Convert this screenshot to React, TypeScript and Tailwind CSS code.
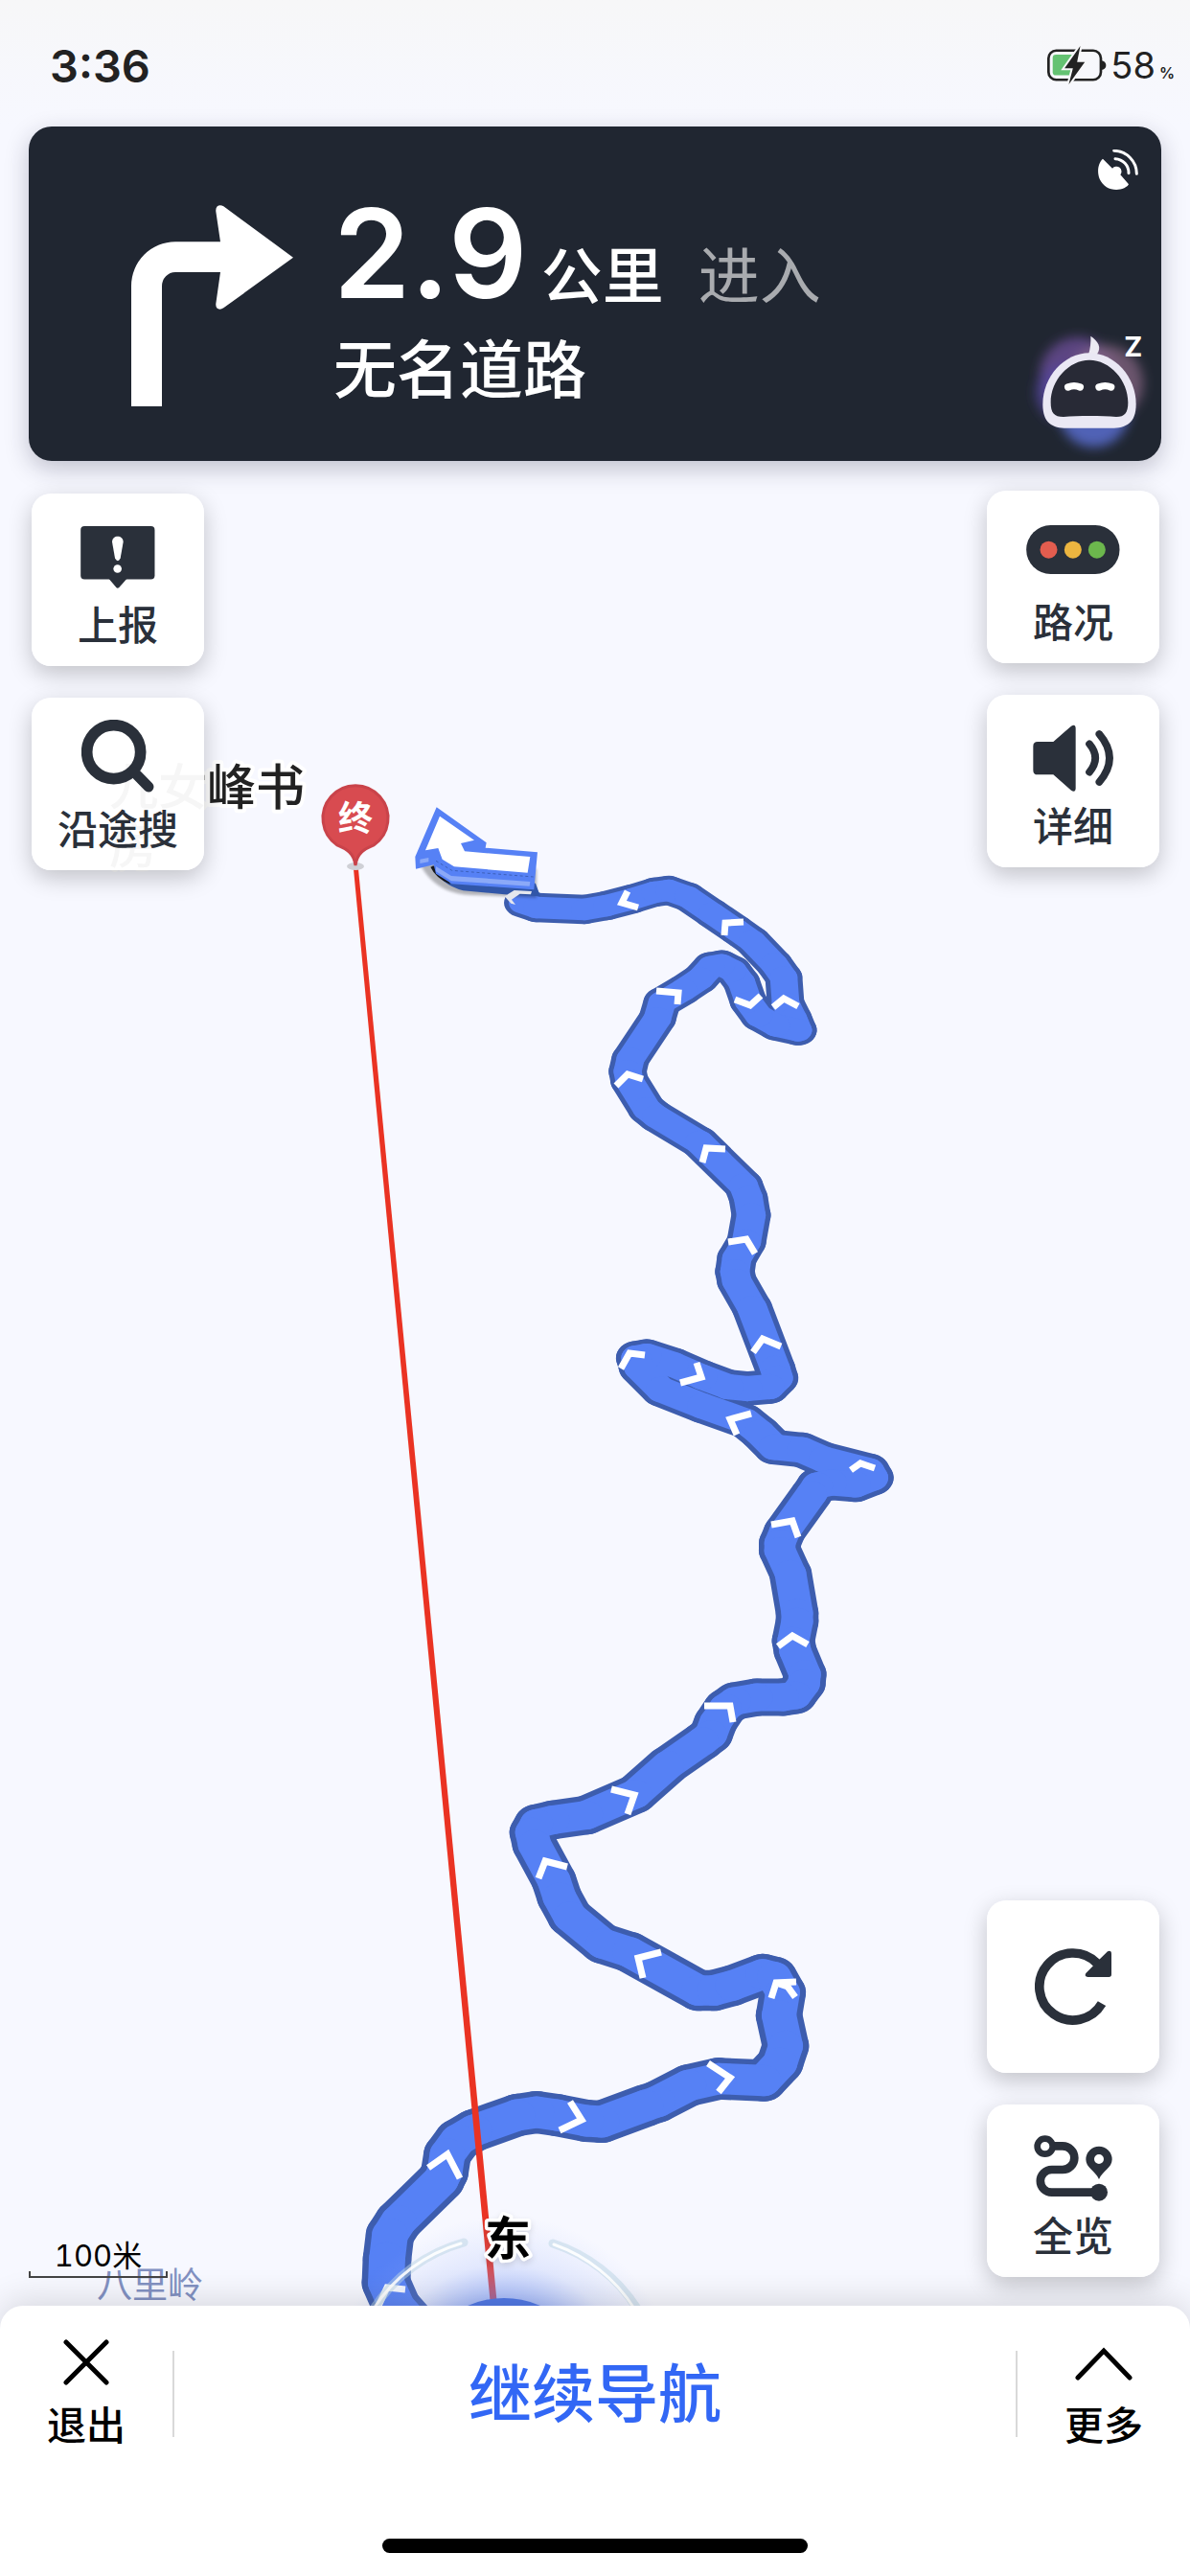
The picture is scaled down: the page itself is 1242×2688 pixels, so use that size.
import type { ReactNode } from 'react'

type Point = [number, number]

// centre line of the planned route, from the next turn back to the car
const ROUTE: Point[] = [
  [545, 942], [560, 947], [610, 949], [633, 945], [660, 938], [683, 931], [698, 929],
  [718, 936], [743, 953], [768, 970], [785, 982], [808, 1006], [818, 1020], [820, 1047],
  [828, 1063], [833, 1075], [810, 1070], [792, 1060], [781, 1045], [774, 1025], [765, 1013],
  [753, 1007], [742, 1009], [731, 1021], [713, 1033], [691, 1046], [686, 1063], [658, 1105],
  [655, 1118], [657, 1128], [675, 1157], [685, 1165], [730, 1192], [776, 1237], [781, 1250],
  [784, 1268], [779, 1296], [769, 1313], [767, 1327], [769, 1337], [785, 1365], [809, 1428],
  [812, 1438], [803, 1447], [780, 1449], [760, 1447], [733, 1437], [703, 1424], [675, 1415],
  [664, 1417], [667, 1427], [690, 1450], [733, 1467], [778, 1483], [793, 1495], [808, 1510],
  [837, 1513], [860, 1523], [907, 1535], [911, 1542], [893, 1549], [868, 1547], [853, 1550],
  [847, 1559], [819, 1598], [814, 1610], [814, 1618], [825, 1642], [832, 1683], [832, 1692],
  [828, 1712], [830, 1723], [840, 1747], [839, 1757], [830, 1769], [817, 1771], [790, 1771],
  [767, 1775], [757, 1782], [747, 1797], [742, 1810], [733, 1817], [697, 1842], [663, 1872],
  [612, 1894], [577, 1899], [560, 1903], [555, 1912], [558, 1925], [578, 1962], [584, 1980],
  [595, 2000], [629, 2028], [657, 2037], [729, 2077], [745, 2077], [764, 2072], [796, 2060],
  [808, 2063], [817, 2079], [813, 2103], [820, 2135], [814, 2153], [797, 2171], [750, 2169],
  [719, 2176], [686, 2193], [674, 2197], [628, 2214], [612, 2213], [581, 2207], [560, 2204],
  [540, 2207], [495, 2223], [478, 2233], [467, 2248], [464, 2267], [460, 2275], [416, 2318],
  [407, 2332], [404, 2357], [403, 2382], [414, 2407], [430, 2425],
]

const CHEVRONS = [
  '655,930 649,942 666,947',
  '776,962 757,963 756,976',
  '807,1051 818,1042 833,1050',
  '767,1043 783,1049 794,1039',
  '685,1034 708,1036 707,1048',
  '643,1133 655,1121 671,1126',
  '757,1199 737,1198 733,1213',
  '760,1296 779,1293 788,1308',
  '786,1411 796,1397 815,1405',
  '727,1422 732,1437 710,1443',
  '648,1428 657,1412 673,1414',
  '784,1475 762,1481 769,1497',
  '888,1534 898,1527 913,1532',
  '805,1591 827,1587 833,1604',
  '812,1718 827,1707 843,1716',
  '735,1780 762,1780 765,1797',
  '638,1867 662,1873 655,1893',
  '562,1960 569,1942 592,1948',
  '690,2037 666,2043 671,2064',
  '805,2085 810,2069 831,2068',
  '813,2070 822,2073 830,2084',
  '739,2153 762,2168 750,2183',
  '595,2193 607,2212 584,2223',
  '447,2262 467,2248 480,2273',
  '395,2406 404,2387 423,2389',
]

// the map is tilted: the line gets wider and less flattened towards the viewer
function RouteStroke({ color, inset }: { color: string; inset: number }) {
  return (
    <g stroke={color} strokeLinecap="round">
      {ROUTE.slice(1).map(([x, y], i) => {
        const [px, py] = ROUTE[i]
        const near = (y - 950) / 1450
        const flat = 0.8 + near * 0.11
        const width = 38 + near * 13 - inset * (10 + near * 3)
        return (
          <line
            key={i}
            x1={px}
            y1={py / flat}
            x2={x}
            y2={y / flat}
            strokeWidth={width}
            transform={`scale(1 ${flat})`}
          />
        )
      })}
    </g>
  )
}

function MapCanvas() {
  return (
    <svg
      className="absolute inset-0 h-full w-full font-['Inter','Noto_Sans_CJK_SC',sans-serif]"
      viewBox="0 0 1242 2688"
      preserveAspectRatio="xMidYMin slice"
      fill="none"
    >
      <defs>
        <radialGradient id="glow">
          <stop offset="0.5" stopColor="#6c8ff6" stopOpacity="0.6" />
          <stop offset="0.72" stopColor="#8fa9f8" stopOpacity="0.2" />
          <stop offset="1" stopColor="#a0b6fa" stopOpacity="0" />
        </radialGradient>
        <filter id="soft" x="-30%" y="-30%" width="160%" height="160%">
          <feGaussianBlur stdDeviation="5" />
        </filter>
      </defs>

      <g fontSize="51" fontWeight="500" fill="#222" stroke="#fff" strokeWidth="8" strokeLinejoin="round" paintOrder="stroke">
        <text x="114" y="840">九女峰书</text>
        <text x="114" y="901">房</text>
      </g>
      <text x="101" y="2398" fontSize="37" fill="#8291c2">八里岭</text>

      <RouteStroke color="#3d5dae" inset={0} />
      <RouteStroke color="#5681f5" inset={1} />
      <g stroke="#fff" strokeWidth="7" strokeLinejoin="miter">
        {CHEVRONS.map((points) => <polyline key={points} points={points} />)}
      </g>

      {/* next manoeuvre */}
      <g transform="translate(360 780) scale(.3333)">
        <path d="M250 390Q300 460 400 462L600 470L600 380L225 350Z" fill="#000" opacity=".28" filter="url(#soft)" />
        <path d="M272 370Q300 430 370 448L500 460L612 466L597 425L300 380Z" fill="#3156a8" />
        <path d="M268 374Q285 410 330 428L320 405L280 370Z" fill="#15171c" />
        <path d="M500 466L530 447L585 450L582 460L548 458L522 476L534 492L520 488Z" fill="#e4e6ee" />
        <path d="M287 187L443 298L440 314L603 328L592 445L335 427L285 395L278 367L222 380L220 342Z" fill="#5681f5" />
        <path d="M297 215L405 290L363 300L375 325L580 342L572 392L342 373L305 350L292 315L252 322Z" fill="#fff" />
        <path d="M285 372L333 402L580 420L578 434L333 418L285 388ZM235 350L262 345V358L235 363Z" fill="#8ba9f8" />
        <path d="M285 355L335 385L590 405" stroke="#3c5fb9" strokeWidth="3" strokeDasharray="9 8" />
      </g>

      {/* straight line from the car to the destination */}
      <path d="M369 907H374L519 2406H512Z" fill="#ea3323" />
      <ellipse cx="371" cy="904" rx="9" ry="4" fill="#cfd0d6" />
      <path
        d="M371 903C369 889 361 886 352 882A34 34 0 1 1 390 882C381 886 373 889 371 903Z"
        fill="#d84b50"
        stroke="#c9434a"
        strokeWidth="3"
      />
      <text x="371" y="867" fontSize="36" fontWeight="700" fill="#fff" textAnchor="middle">终</text>

      {/* car puck with the compass ring */}
      <circle cx="526" cy="2492" r="180" fill="url(#glow)" />
      <circle cx="526" cy="2492" r="94" fill="#5279e6" />
      <g strokeLinecap="round">
        <path d="M484 2340A163 163 0 0 0 390 2409M577 2341A163 163 0 0 1 665 2409" stroke="#bcd6e4" strokeWidth="9" opacity=".5" />
        <path d="M481 2341A163 163 0 0 0 390 2409M578 2342A163 163 0 0 1 662 2409" stroke="#fff" strokeWidth="3" opacity=".9" />
      </g>
      <text
        x="530"
        y="2353"
        fontSize="48"
        fontWeight="700"
        fill="#000"
        stroke="#fff"
        strokeWidth="7"
        strokeLinejoin="round"
        paintOrder="stroke"
        textAnchor="middle"
        className="drop-shadow-md"
      >
        东
      </text>
    </svg>
  )
}

function StatusBar() {
  return (
    <div className="flex h-[132px] items-center justify-between bg-linear-to-b from-[#f7f7f8] to-[#f7f8ff] pt-1 pr-4 pl-[52px] text-[#222]">
      <span className="text-[47px] leading-none font-semibold">3:36</span>
      <div className="flex items-center gap-1">
        <svg className="h-[42px] w-[62px]" viewBox="138 80 185 125">
          <rect x="142" y="97" width="163" height="91" rx="24" fill="none" stroke="#222" strokeWidth="8" />
          <rect x="155" y="110" width="78" height="64" rx="10" fill="#64c272" />
          <path d="M307 128C318 130 321 137 321 143S318 155 307 157Z" fill="#222" />
          <path d="M241 83L192 152H218L205 202L255 133H231Z" fill="#222" stroke="#f7f7f9" strokeWidth="12" paintOrder="stroke" />
        </svg>
        <span className="flex items-baseline gap-1">
          <span className="text-[38px] leading-none">58</span>
          <span className="text-base leading-none font-semibold">%</span>
        </span>
      </div>
    </div>
  )
}

function TurnCard() {
  return (
    <section className="mx-[30px] flex h-[349px] rounded-3xl bg-[#202631] text-white shadow-[0_8px_24px_rgba(30,30,60,0.25)]">
      <svg className="mt-[82px] ml-[107px] h-[210px] w-[169px] shrink-0" viewBox="81 72 507 630">
        <path
          d="M81 702V325A138 138 0 0 1 219 187H360L346 92C344 74 358 68 370 76L588 236L370 394C358 402 344 398 346 380L360 282H219A42 44 0 0 0 177 326V702Z"
          fill="#fff"
        />
      </svg>
      <div className="flex-1 pt-[68px] pl-[42px] whitespace-nowrap">
        <div className="flex items-baseline">
          <strong className="text-[129px] leading-[128px] font-semibold">2.9</strong>
          <span className="ml-[14px] text-[64px] leading-[96px] font-medium">公里</span>
          <span className="ml-9 text-[64px] leading-[96px] text-[#a9abaf]">进入</span>
        </div>
        <div className="mt-[10px] text-[66px] leading-[80px] font-medium">无名道路</div>
      </div>
      <div className="flex flex-col items-end justify-between">
        <svg className="mt-6 mr-6 h-[42px] w-[42px]" viewBox="288 408 126 126" fill="#fff">
          <path d="M303 437L333 467A16 16 0 0 1 358 487L384 517Q382 524 370 529C340 541 306 530 293 500C283 475 290 448 303 437Z" />
          <path d="M342 437A44 44 0 0 1 384 482M338 412A72 72 0 0 1 409 484" fill="none" stroke="#fff" strokeWidth="9" strokeLinecap="round" />
        </svg>
        <svg className="h-[140px] w-[144px]" viewBox="54 33 432 420">
          <defs>
            <filter id="blur" x="-50%" y="-50%" width="200%" height="200%">
              <feGaussianBlur stdDeviation="18" />
            </filter>
          </defs>
          <g filter="url(#blur)">
            <circle cx="225" cy="185" r="120" fill="#70509c" opacity=".75" />
            <circle cx="310" cy="210" r="120" fill="#8a6a86" opacity=".7" />
            <circle cx="185" cy="240" r="92" fill="#54459e" opacity=".75" />
            <circle cx="275" cy="300" r="110" fill="#5468c4" opacity=".9" />
          </g>
          <path d="M265 62C288 78 301 97 284 120H258C264 102 266 80 265 62Z" fill="#eceaf3" />
          <path d="M261 115C340 115 407 190 407 275C407 335 375 350 330 350H190C145 350 115 335 115 275C115 190 182 115 261 115Z" fill="#eae8f4" />
          <path d="M261 137C325 137 382 200 382 270C382 302 372 315 345 315C300 311 225 311 180 315C150 315 140 302 140 270C140 200 197 137 261 137Z" fill="#282a36" />
          <path d="M194 222Q213 214 232 222M291 222Q310 214 329 222" fill="none" stroke="#fff" strokeWidth="22" strokeLinecap="round" />
          <text x="370" y="127" fontSize="86" fontWeight="700" fill="#fff" className="font-['Inter',sans-serif]">Z</text>
        </svg>
      </div>
    </section>
  )
}

function MapButton({ label, name, children }: { label?: string; name?: string; children: ReactNode }) {
  return (
    <button
      aria-label={name}
      className="flex h-[180px] w-[180px] flex-col items-center justify-center rounded-[20px] bg-white/96 text-[42px] leading-[48px] font-medium text-[#2a303a] shadow-[0_8px_24px_rgba(0,0,0,0.22)]"
    >
      <span className="flex h-24 items-center justify-center">{children}</span>
      {label && <span>{label}</span>}
    </button>
  )
}

function ReportIcon() {
  return (
    <svg className="h-[65px] w-[78px]" viewBox="256 177 234 196" fill="#2a303a">
      <rect x="256" y="177" width="233" height="167" rx="12" />
      <path d="M345 343L368 370Q372 374 377 370L401 343Z" />
      <path d="M355 227C355 204 390 204 390 227L381 278Q373 294 364 278Z" fill="#fff" />
      <circle cx="372" cy="311" r="13" fill="#fff" />
    </svg>
  )
}

function SearchIcon() {
  return (
    <svg className="h-[86px] w-[76px]" viewBox="252 775 228 258" fill="none" stroke="#2a303a">
      <circle cx="353" cy="876" r="84" strokeWidth="35" />
      <path d="M418 940L462 985" strokeWidth="33" strokeLinecap="round" />
    </svg>
  )
}

function TrafficIcon() {
  return (
    <svg className="h-[61px] w-[98px]" viewBox="271 173 293 183">
      <rect x="271" y="173" width="292" height="153" rx="76" fill="#2a303a" />
      <circle cx="341" cy="250" r="27" fill="#e35d4f" />
      <circle cx="417" cy="250" r="27" fill="#ecb540" />
      <circle cx="492" cy="250" r="27" fill="#6cb74d" />
    </svg>
  )
}

function VolumeIcon() {
  return (
    <svg className="h-[70px] w-[84px]" viewBox="291 794 252 210" fill="#2a303a">
      <path d="M306 848H355L411 799Q424 791 425 805V994Q424 1008 411 1000L355 951H306Q292 951 292 937V862Q292 848 306 848Z" />
      <path d="M468 855Q505 899 468 943M499 824Q563 899 499 974" fill="none" stroke="#2a303a" strokeWidth="23" strokeLinecap="round" />
    </svg>
  )
}

function RefreshIcon() {
  return (
    <svg className="h-20 w-20" viewBox="297 279 240 240">
      <path d="M507 452A105 105 0 1 1 491 325" fill="none" stroke="#2a303a" strokeWidth="29" />
      <path d="M525 289Q537 284 537 297V361Q537 369 529 369H463Q451 368 457 357L480 334L499 314Z" fill="#2a303a" />
    </svg>
  )
}

function OverviewIcon() {
  return (
    <svg className="h-[69px] w-[82px]" viewBox="306 859 246 207" fill="none" stroke="#2a303a">
      <circle cx="341" cy="894" r="24" strokeWidth="20" />
      <path d="M370 893H396A37 37 0 0 1 396 967H362A35 35 0 0 0 362 1038H500" strokeWidth="26" />
      <circle cx="510" cy="1038" r="27" fill="#2a303a" stroke="none" />
      <path
        d="M510 894A41 41 0 0 1 551 935C551 962 522 970 510 997C498 970 469 962 469 935A41 41 0 0 1 510 894ZM510 919A15 15 0 1 0 510 949A15 15 0 1 0 510 919Z"
        fill="#2a303a"
        stroke="none"
      />
    </svg>
  )
}

function ScaleBar() {
  return (
    <div className="w-[145px] text-center text-[31px] leading-8 text-black tabular-nums">
      100米
      <div className="h-[7px] border-x-2 border-b-2 border-[#444]" />
    </div>
  )
}

function BottomSheet() {
  return (
    <footer className="relative rounded-t-3xl bg-white pb-6 shadow-[0_-4px_36px_rgba(0,0,0,0.14)]">
      <div className="flex h-[184px] items-center text-[41px] leading-[48px] font-medium">
        <button className="flex w-[180px] flex-col items-center gap-[18px]">
          <svg className="h-12 w-12" viewBox="0 0 48 48" fill="none" stroke="#000" strokeWidth="5" strokeLinecap="round">
            <path d="M3 3L45 45M45 3L3 45" />
          </svg>
          退出
        </button>
        <div className="h-[90px] w-[2px] bg-[#d9d9d9]" />
        <button className="flex-1 text-[66px] leading-[80px] text-[#3267f5]">继续导航</button>
        <div className="h-[90px] w-[2px] bg-[#d9d9d9]" />
        <button className="flex w-[180px] flex-col items-center gap-[18px]">
          <svg className="h-12 w-[60px]" viewBox="0 0 60 48" fill="none" stroke="#000" strokeWidth="5" strokeLinecap="round">
            <path d="M3 40L30 12L57 40" />
          </svg>
          更多
        </button>
      </div>
      <div className="mx-auto mt-[59px] h-[15px] w-[444px] rounded-full bg-black" />
    </footer>
  )
}

export default function App() {
  return (
    <div className="relative flex min-h-screen flex-col overflow-hidden bg-[#f7f8ff] font-['Inter','Noto_Sans_CJK_SC',sans-serif]">
      <MapCanvas />
      <header className="relative">
        <StatusBar />
        <TurnCard />
      </header>
      <main className="relative flex flex-1 justify-between">
        <div className="flex flex-col justify-between pt-[34px] pb-[29px] pl-[30px]">
          <div className="flex flex-col gap-[33px] pl-[3px]">
            <MapButton label="上报"><ReportIcon /></MapButton>
            <MapButton label="沿途搜"><SearchIcon /></MapButton>
          </div>
          <ScaleBar />
        </div>
        <div className="flex flex-col justify-between pt-[31px] pr-8 pb-[30px]">
          <div className="flex flex-col gap-[33px]">
            <MapButton label="路况"><TrafficIcon /></MapButton>
            <MapButton label="详细"><VolumeIcon /></MapButton>
          </div>
          <div className="flex flex-col gap-[33px]">
            <MapButton name="刷新"><RefreshIcon /></MapButton>
            <MapButton label="全览"><OverviewIcon /></MapButton>
          </div>
        </div>
      </main>
      <BottomSheet />
    </div>
  )
}
